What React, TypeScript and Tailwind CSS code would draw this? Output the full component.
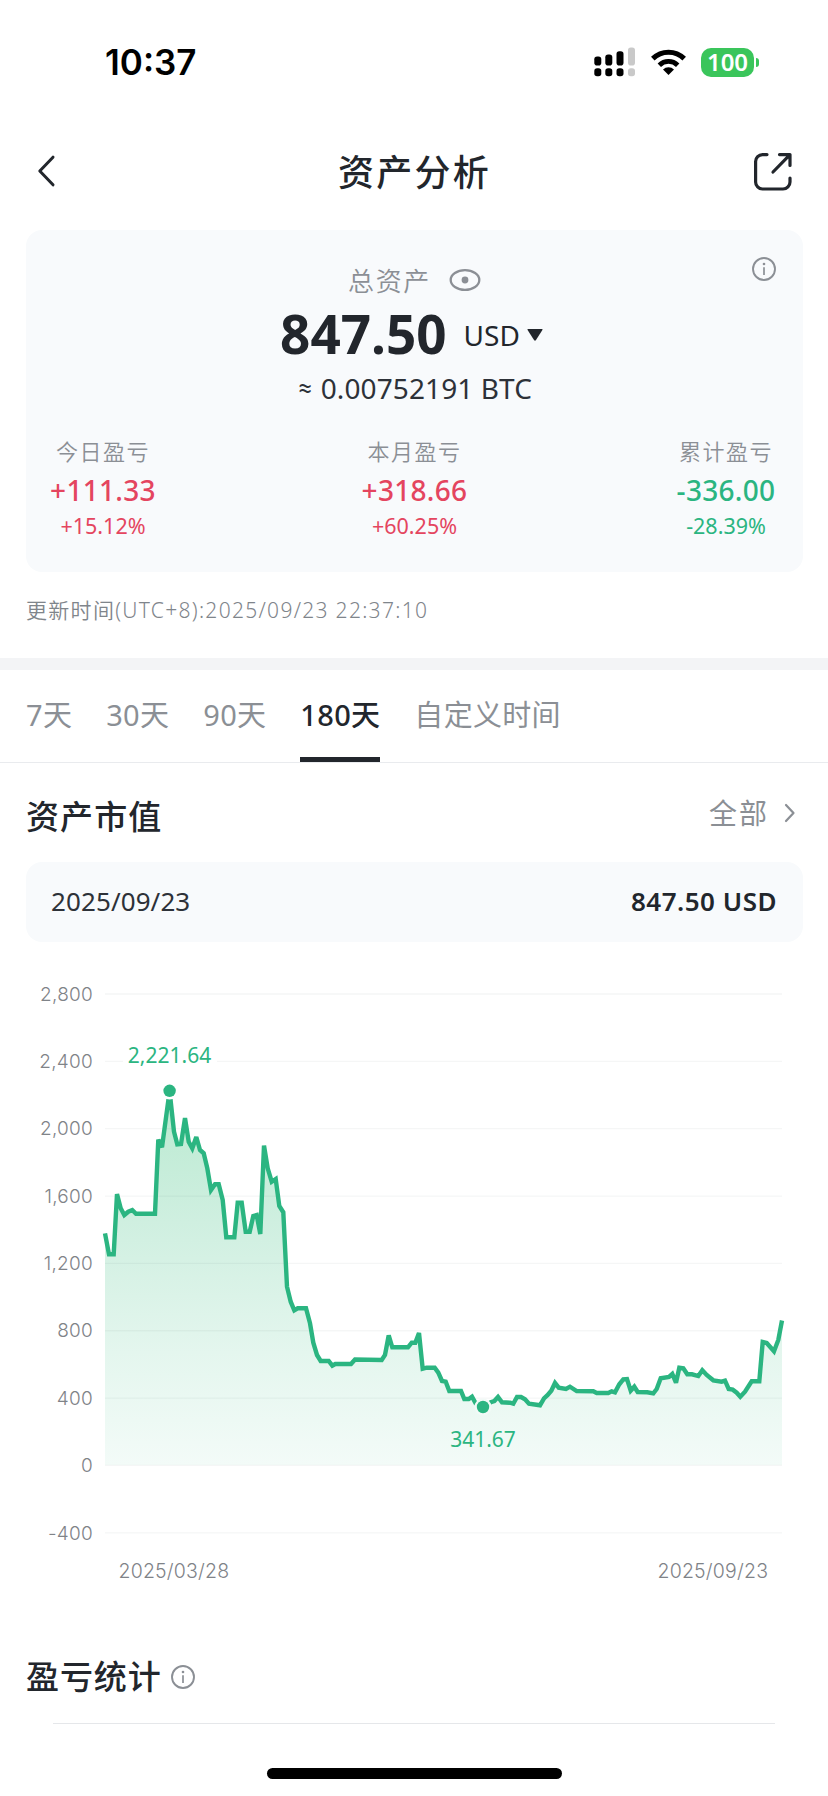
import React from "react";

const GREEN = "#2bb581";

const LINE: [number, number][] = [
  [105, 1233.3], [109, 1254.3], [113.7, 1254.3], [117, 1194], [120.7, 1208.3], [124.3, 1215], [128.3, 1211.7],
  [132.3, 1210], [136, 1213.7], [155, 1213.7], [158.3, 1139.7], [162, 1147.3], [169.6, 1091], [174, 1131.7],
  [177.3, 1144.3], [181, 1144], [185, 1118], [188.7, 1141.7], [192.3, 1148.3], [196.3, 1137], [200, 1150],
  [203.7, 1153.3], [207.3, 1168.3], [211, 1190], [215, 1184.3], [218.7, 1184.3], [222.7, 1200], [226.3, 1237.3],
  [234.3, 1237.3], [237.7, 1202.7], [241.7, 1202.7], [245.7, 1231.7], [249.7, 1231.7], [253.3, 1216],
  [256.7, 1215], [260.3, 1234], [264, 1145.5], [267.7, 1168.3], [271.7, 1181.7], [275.7, 1179], [279.3, 1206],
  [283.3, 1212.3], [287, 1286.7], [290.7, 1301.7], [294.3, 1310.3], [297.7, 1308.3], [306, 1308.3],
  [310, 1323.3], [313.3, 1342.7], [317, 1355], [320.7, 1361], [328.7, 1361], [332.3, 1365.7], [335.3, 1364],
  [351, 1364], [355, 1359.5], [381.7, 1360], [385, 1355], [388.7, 1335.5], [392.3, 1347.3], [408, 1347.3],
  [411.7, 1342.7], [415.3, 1342.7], [419, 1333], [422.7, 1368.7], [426.7, 1367.7], [434.7, 1367.7],
  [438.3, 1372.7], [442, 1381], [445.7, 1381.7], [449.3, 1391], [461, 1391], [464.3, 1399], [468.7, 1399],
  [472, 1396.7], [475.7, 1403.3], [483, 1407], [490.7, 1402.3], [494.3, 1401], [498, 1397], [502, 1402.3],
  [510, 1402.7], [513.3, 1403.7], [517, 1397], [521, 1397], [525, 1399.3], [529, 1403.7], [540, 1405.3],
  [544, 1398.3], [547.7, 1395], [551.3, 1390.7], [555, 1383], [558.7, 1387.7], [566, 1389], [570, 1386.7],
  [576.7, 1391], [593.3, 1391.3], [596.7, 1393], [608.3, 1393], [611.7, 1391.3], [615, 1392.3],
  [619.3, 1384.3], [623.3, 1379.3], [627, 1379], [630.7, 1390.7], [634.3, 1386.7], [637.7, 1392],
  [647.3, 1392.3], [653.3, 1393.3], [656.7, 1389], [660.7, 1378.3], [669, 1377], [672.3, 1374],
  [676, 1382.7], [679.3, 1367.7], [683.3, 1368.3], [687.3, 1374.3], [692, 1374.3], [698.3, 1376],
  [702.3, 1370.3], [706.7, 1375], [713.3, 1380.3], [721.7, 1381.7], [725, 1380.7], [728.7, 1389],
  [732.7, 1389.7], [736.7, 1392.7], [740.3, 1396.7], [745, 1391.7], [751.7, 1381.3], [759.3, 1381.3],
  [762.7, 1342], [766.7, 1343], [774, 1351.3], [778.3, 1340], [782, 1320.5],
];

const TICKS = ["2,800", "2,400", "2,000", "1,600", "1,200", "800", "400", "0", "-400"];

const tickY = (i: number) => 994 + i * 67.35;

function Chart() {
  const points = LINE.map((p) => p.join(",")).join(" ");
  return (
    <svg className="block h-[638px] w-[828px]" viewBox="0 962 828 638">
      <defs>
        <linearGradient id="fill" gradientUnits="userSpaceOnUse" x1="0" y1="1090" x2="0" y2="1465">
          <stop offset="0" stopColor="#b9ead0" />
          <stop offset="0.35" stopColor="#cfefe0" />
          <stop offset="0.7" stopColor="#e4f6ee" />
          <stop offset="1" stopColor="#f3fbf8" />
        </linearGradient>
      </defs>
      <polygon points={`105,1465 ${points} 782,1465`} fill="url(#fill)" />
      {TICKS.map((t, i) => (
        <g key={t}>
          <line x1="105" x2="782" y1={tickY(i)} y2={tickY(i)} stroke="#1f2937" strokeOpacity="0.045" strokeWidth="1.3" />
          <text
            x="93"
            y={tickY(i) + 6.7}
            textAnchor="end"
            className="fill-[#7f8388] font-['Inter',sans-serif] text-[19px] font-light tracking-[0.25px]"
          >
            {t}
          </text>
        </g>
      ))}
      <polyline points={points} fill="none" stroke={GREEN} strokeWidth="4.4" strokeLinejoin="miter" strokeMiterlimit="3" />
      <circle cx="169.6" cy="1090.8" r="8.6" fill="#fff" />
      <circle cx="169.6" cy="1090.8" r="6.2" fill={GREEN} />
      <circle cx="483" cy="1407" r="8.6" fill="#f2faf7" />
      <circle cx="483" cy="1407" r="6.2" fill={GREEN} />
      <rect x="123" y="1045" width="94" height="22" fill="#fff" />
      <g className="fill-[#2bb581] font-['Noto_Sans',sans-serif] text-[21px]" textAnchor="middle">
        <text x="169.5" y="1063">2,221.64</text>
        <text x="483" y="1447">341.67</text>
      </g>
      <g className="fill-[#7f8388] font-['Inter',sans-serif] text-[19.5px] font-light tracking-[0.2px]">
        <text x="118.5" y="1577.5">2025/03/28</text>
        <text x="657.5" y="1577.5">2025/09/23</text>
      </g>
    </svg>
  );
}

function InfoIcon() {
  return (
    <svg className="block size-[26px]" viewBox="0 0 26 26" fill="none">
      <circle cx="13" cy="13" r="11" stroke="#8b8f95" strokeWidth="1.9" />
      <path d="M13 11.2V19" stroke="#8b8f95" strokeWidth="1.7" />
      <circle cx="13" cy="8" r="1.3" fill="#8b8f95" />
    </svg>
  );
}

function StatusBar() {
  return (
    <div className="flex h-[124px] items-center pl-[105px] pr-[69px]">
      <div className="flex-1 font-['Inter',sans-serif] text-[35px] font-semibold leading-none text-black">10:37</div>
      <svg className="block h-[30px] w-[42px]" viewBox="0 0 42 30">
        <rect x="0.3" y="9.5" width="7" height="9" rx="2.8" />
        <rect x="11.3" y="7.5" width="7" height="11" rx="2.8" />
        <rect x="22.5" y="4.3" width="7" height="14.2" rx="2.8" />
        <rect x="34" y="0.5" width="7" height="18" rx="2.8" fill="#c9c9c9" />
        <rect x="0.3" y="21.3" width="7" height="8" rx="2.8" />
        <rect x="11.3" y="21.3" width="7" height="8" rx="2.8" />
        <rect x="22.5" y="21.3" width="7" height="8" rx="2.8" />
        <rect x="34" y="21.3" width="7" height="8" rx="2.8" fill="#c9c9c9" />
      </svg>
      <svg className="ml-[15px] block h-[27px] w-[35px]" viewBox="0 0 35 27" fill="none" stroke="#000">
        <path d="M1.8 9.6A22.3 22.3 0 0 1 33.2 9.6" strokeWidth="5" />
        <path d="M8.3 16.2A13.2 13.2 0 0 1 26.7 16.2" strokeWidth="4.8" />
        <path d="M17.5 26L12 20.6A7.8 7.8 0 0 1 23 20.6Z" fill="#000" stroke="none" />
      </svg>
      <div className="ml-[15px] flex h-[29px] w-[53px] items-center justify-center rounded-[10px] bg-[#3ac55b] pb-px font-['Noto_Sans',sans-serif] text-[24px] font-semibold leading-none text-white">
        100
      </div>
      <div className="ml-[2px] h-[9px] w-[3px] rounded-r-full bg-[#3ac55b]" />
    </div>
  );
}

const STATS = [
  { label: "今日盈亏", value: "+111.33", pct: "+15.12%", tone: "text-[#e4455f]" },
  { label: "本月盈亏", value: "+318.66", pct: "+60.25%", tone: "text-[#e4455f]" },
  { label: "累计盈亏", value: "-336.00", pct: "-28.39%", tone: "text-[#2bb581]" },
];

const TABS = ["7天", "30天", "90天", "180天", "自定义时间"];

export default function App() {
  return (
    <div className="flex h-[1796px] w-[828px] flex-col overflow-hidden bg-white font-['Noto_Sans','Noto_Sans_CJK_SC',sans-serif] text-[#22262c]">
      <StatusBar />

      <header className="flex h-[94px] items-center justify-between pl-[36px] pr-[35px]">
        <svg className="block h-[34px] w-[38px]" viewBox="0 0 38 34" fill="none" stroke="#22262c" strokeWidth="3" strokeLinecap="round" strokeLinejoin="round">
          <path d="M17 3.2L3.8 17L17 30.8" />
        </svg>
        <h1 className="pl-[2px] pt-[4px] text-[36px] font-medium leading-none tracking-[2.2px]">资产分析</h1>
        <svg className="block size-[40px]" viewBox="0 0 40 40" fill="none" stroke="#22262c" strokeWidth="3.2" strokeLinecap="round" strokeLinejoin="round">
          <path d="M14 3.6H9.5A7 7 0 0 0 2.6 10.5V31A7 7 0 0 0 9.5 38H30A7 7 0 0 0 37 31V27" />
          <path d="M26.5 3.6H37V14.5M36.5 4.2L20 21" />
        </svg>
      </header>

      <section className="relative ml-[26px] mr-[25px] mt-[12px] flex h-[342px] flex-col rounded-[16px] bg-[#f8fafc] pt-[32px]">
        <div className="absolute right-[26px] top-[26px]">
          <InfoIcon />
        </div>
        <div className="flex h-9 items-center justify-center text-[#8b8f95]">
          <span className="pt-px text-[26px] font-[350] leading-none tracking-[1.6px]">总资产</span>
          <svg className="ml-[18px] block h-[24px] w-[32px]" viewBox="0 0 32 24" fill="none">
            <ellipse cx="16" cy="12" rx="14.3" ry="9.8" stroke="#8b8f95" strokeWidth="2.3" />
            <circle cx="16" cy="12" r="3.4" fill="#8b8f95" />
          </svg>
        </div>
        <div className="mt-[5px] flex h-[60px] items-center justify-center pr-[6px]">
          <span className="text-[53px] font-bold leading-none">847.50</span>
          <span className="ml-[17px] mt-[3px] text-[28px] leading-none">USD</span>
          <svg className="ml-[7px] mt-[4px] block h-3 w-4" viewBox="0 0 16 12">
            <path d="M1 0H15Q16 0 15.4 1L9 11Q8 12.4 7 11L0.6 1Q0 0 1 0Z" fill="#22262c" />
          </svg>
        </div>
        <div className="mt-[7px] flex h-9 items-center justify-center whitespace-pre text-[28px] leading-none tracking-[0.1px] text-[#2d3138]">
          <span className="font-['Lato',sans-serif]">≈</span> 0.00752191 BTC
        </div>
        <div className="mt-[30px] flex justify-between pl-[24px] pr-[24px]">
          {STATS.map((s) => (
            <div key={s.label} className="flex w-[106px] flex-col items-center whitespace-nowrap">
              <div className="flex h-8 items-center pb-[2px] text-[22px] font-[350] leading-none tracking-[1.5px] text-[#8b8f95]">{s.label}</div>
              <div className={`mt-1 flex h-9 items-center pb-px text-[28px] font-medium leading-none tracking-[0.3px] ${s.tone}`}>{s.value}</div>
              <div className={`mt-1 flex h-7 items-center text-[21.5px] leading-none ${s.tone}`}>{s.pct}</div>
            </div>
          ))}
        </div>
      </section>

      <div className="flex h-[86px] items-center pb-[9px] pl-[26px] text-[21px] font-[350] leading-none tracking-[1.3px] text-[#7f858b]">
        更新时间(UTC+8):2025/09/23 22:37:10
      </div>
      <div className="h-[12px] bg-[#f3f4f6]" />

      <nav className="flex h-[93px] gap-[34px] border-b border-[#e9ebee] px-[26px] text-[29px] leading-none text-[#8b8f95]">
        {TABS.map((t) => (
          <div
            key={t}
            className={
              t === "180天"
                ? "flex h-[92px] items-center border-b-[5px] border-[#22262c] pt-[2px] font-medium tracking-[0.3px] text-[#22262c]"
                : "flex h-[92px] items-center border-b-[5px] border-transparent pt-[2px] tracking-[0.3px]"
            }
          >
            {t}
          </div>
        ))}
      </nav>

      <div className="flex h-[99px] items-center justify-between pl-[26px] pr-[30px]">
        <h2 className="pt-[7px] text-[33px] font-medium leading-none tracking-[1.1px]">资产市值</h2>
        <div className="flex items-center text-[28px] leading-none tracking-[2px] text-[#8b8f95]">
          全部
          <svg className="ml-[13px] block h-[20px] w-[16px]" viewBox="0 0 16 20" fill="none" stroke="#8b8f95" strokeWidth="2.2" strokeLinecap="round" strokeLinejoin="round">
            <path d="M4 2L11.5 10L4 18" />
          </svg>
        </div>
      </div>

      <div className="ml-[26px] mr-[25px] flex h-[80px] items-center justify-between rounded-[16px] bg-[#f8fafc] pb-[2px] pl-[25px] pr-[26px] text-[26px] leading-none">
        <span className="tracking-[0.1px] text-[#2d3138]">2025/09/23</span>
        <span className="font-semibold tracking-[0.5px]">847.50 USD</span>
      </div>

      <div className="mt-[20px]">
        <Chart />
      </div>

      <div className="flex h-[123px] items-end pb-[30px] pl-[26px]">
        <h2 className="text-[33px] font-medium leading-none tracking-[0.9px]">盈亏统计</h2>
        <div className="ml-[8px] pb-[3px]">
          <InfoIcon />
        </div>
      </div>
      <div className="mx-[53px] h-px shrink-0 bg-[#e5e7ea]" />
      <div className="mx-auto mt-[44px] h-[11px] w-[295px] shrink-0 rounded-full bg-black" />
    </div>
  );
}
